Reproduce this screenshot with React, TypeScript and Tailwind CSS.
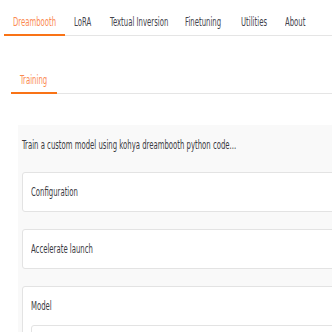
const tabs = [
  { label: "Dreambooth", w: "w-[61px]" },
  { label: "LoRA", w: "w-[36px]" },
  { label: "Textual Inversion", w: "w-[75px]" },
  { label: "Finetuning", w: "w-[56px]" },
  { label: "Utilities", w: "w-[44px]" },
  { label: "About", w: "w-[40px]" },
]

const font = { fontFamily: '"DejaVu Sans Condensed", "Liberation Sans", sans-serif' }

// the reference uses a very narrow face, so squeeze the text horizontally
function T({ children }: { children: React.ReactNode }) {
  return <span className="inline-block origin-left scale-x-[0.64] whitespace-nowrap">{children}</span>
}

function Block({ title, children }: { title: string; children?: React.ReactNode }) {
  return (
    <div className="rounded-[3px] border border-[#e3e3e3] bg-white">
      <div className="px-2 py-[11px] text-[#3b3b42] leading-4"><T>{title}</T></div>
      {children}
    </div>
  )
}

export default function App() {
  return (
    <div className="w-[332px] h-[332px] overflow-hidden bg-white" style={font}>
      <div className="w-[800px] pl-1 text-[12px]">
        <div className="flex border-b border-[#e5e5e5] pt-[14px]">
          {tabs.map((t, i) => (
            <div
              key={t.label}
              className={
                i === 0
                  ? `${t.w} shrink-0 px-[9px] pb-[4px] leading-4 text-[#fb8a52] border-b-2 border-[#f97316] -mb-px`
                  : `${t.w} shrink-0 px-[9px] pb-[5px] leading-4 text-[#44444c]`
              }
            >
              <T>{t.label}</T>
            </div>
          ))}
        </div>

        <div className="pl-[7px] pt-[36px]">
          <div className="flex border-b border-[#e5e5e5]">
            <div className="w-[46px] shrink-0 px-[9px] pb-[4px] leading-4 text-[#fb8a52] border-b-2 border-[#f97316] -mb-px">
              <T>Training</T>
            </div>
          </div>

          <div className="pl-[7px] pt-[31px]">
            <div className="bg-[#f9f9f9] px-1 pt-[12px] pb-4">
              <div className="leading-4 text-[#3b3b42]"><T>Train a custom model using kohya dreambooth python code...</T></div>
              <div className="mt-[19px] flex flex-col gap-[17px]">
                <Block title="Configuration" />
                <Block title="Accelerate launch" />
                <Block title="Model">
                  <div className="px-2 pb-3">
                    <div className="h-10 rounded-[3px] border border-[#e3e3e3] bg-white" />
                  </div>
                </Block>
              </div>
            </div>
          </div>
        </div>
      </div>
    </div>
  )
}
